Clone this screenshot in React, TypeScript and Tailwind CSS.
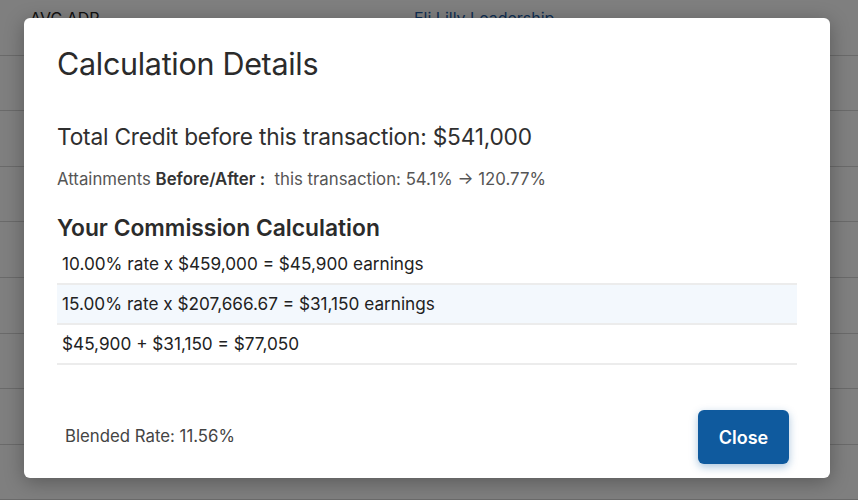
import React from "react";

const ROWS = [
  "10.00% rate x $459,000 = $45,900 earnings",
  "15.00% rate x $207,666.67 = $31,150 earnings",
  "$45,900 + $31,150 = $77,050",
];

function Background() {
  return (
    <div className="absolute inset-0 bg-white">
      <div className="flex flex-col">
        {Array.from({ length: 9 }).map((_, i) => (
          <div
            key={i}
            className="h-[55.6px] border-b border-[#d4d4d4] flex items-start px-[30px] pt-[6px] text-[16px] text-[#222]"
          >
            {i === 0 && (
              <>
                <span className="w-[384px]">AVC ADP</span>
                <span className="text-[#1f5fa8]">Eli Lilly Leadership</span>
              </>
            )}
          </div>
        ))}
      </div>
      <div className="absolute inset-0 bg-black/50" />
    </div>
  );
}

export default function App() {
  return (
    <div
      className="relative w-[858px] h-[500px] overflow-hidden"
      style={{ fontFamily: "Inter, 'Noto Sans', sans-serif" }}
    >
      <Background />
      <div className="relative pt-[18px] px-[24px]">
        <div className="w-[806px] h-[460px] bg-white rounded-[6px] shadow-[0_4px_20px_rgba(0,0,0,0.3)] px-[33px] pt-[27px] flex flex-col">
          <h2 className="text-[30.5px] leading-[38px] text-[#2b2b2b] tracking-[-0.3px]">
            Calculation Details
          </h2>

          <p className="mt-[40px] text-[22.7px] leading-[28px] text-[#2f2f2f] tracking-[-0.2px]">
            Total Credit before this transaction: $541,000
          </p>

          <p className="mt-[17px] text-[16.8px] leading-[22px] text-[#555]">
            Attainments <span className="font-semibold text-[#333]">Before/After :</span>
            {"\u00a0\u00a0"}this transaction: 54.1% → 120.77%
          </p>

          <h3 className="mt-[24px] text-[22.8px] leading-[28px] font-semibold text-[#2b2b2b]">
            Your Commission Calculation
          </h3>

          <div className="mt-[3px] w-[740px] flex flex-col">
            {ROWS.map((row, i) => (
              <div
                key={i}
                className={`h-[40px] flex items-center px-[5px] border-b-2 border-[#ececec] text-[17.2px] text-[#222] ${
                  i === 1 ? "bg-[#f3f8fd]" : ""
                }`}
              >
                {row}
              </div>
            ))}
          </div>

          <div className="mt-auto mb-[14px] flex items-center justify-between pl-[8px] pr-[8px]">
            <span className="text-[16.8px] text-[#444]">Blended Rate: 11.56%</span>
            <button className="w-[91px] h-[54px] rounded-[6px] bg-[#0f5a9e] text-white text-[18px] font-semibold shadow-[0_3px_8px_rgba(15,90,158,0.35)]">
              Close
            </button>
          </div>
        </div>
      </div>
    </div>
  );
}
